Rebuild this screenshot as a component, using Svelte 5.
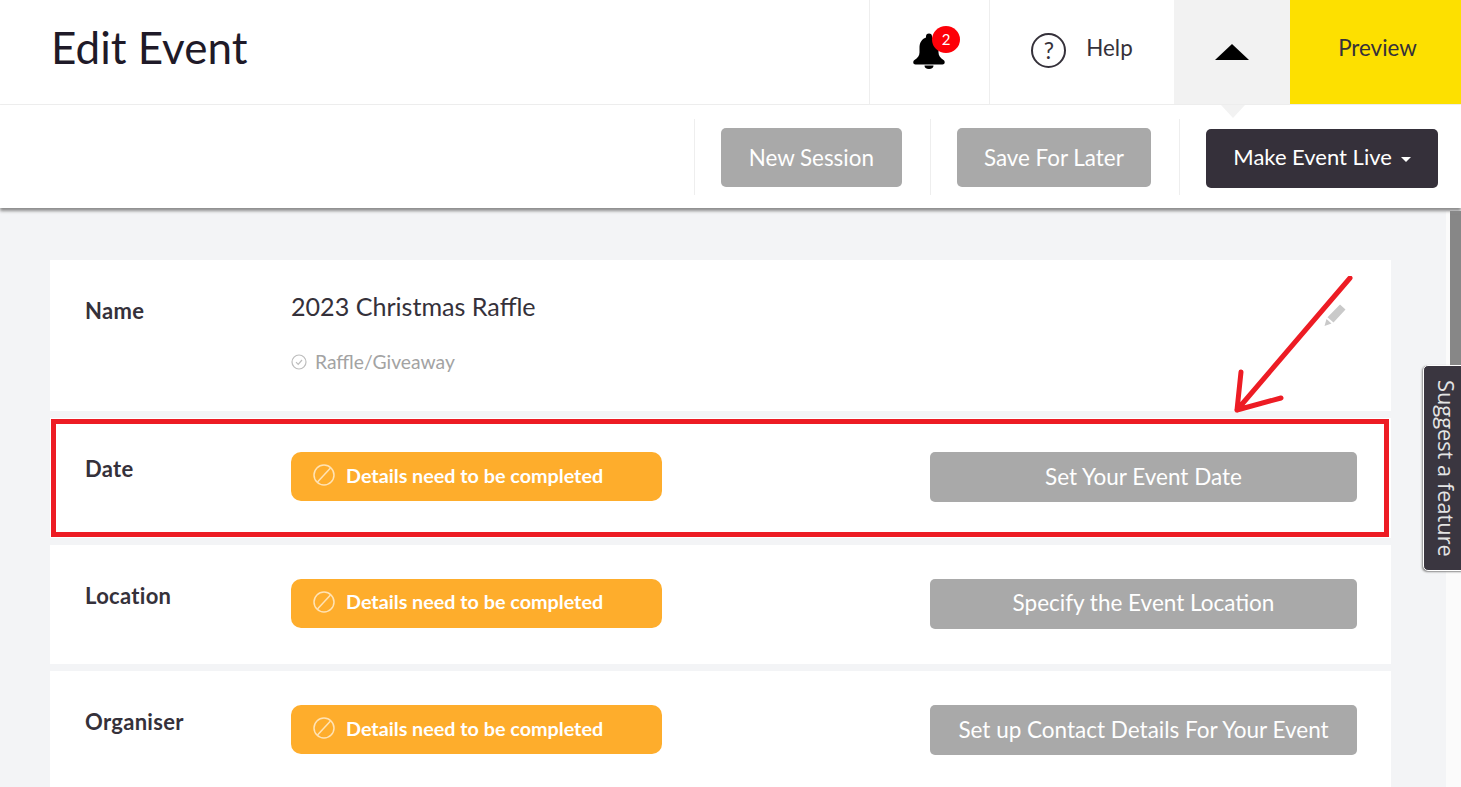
<script>
    const rows = [
        { label: "Date", action: "Set Your Event Date" },
        { label: "Location", action: "Specify the Event Location" },
        { label: "Organiser", action: "Set up Contact Details For Your Event" }
    ];
</script>

<div class="page">
    <header class="top">
        <h1>Edit Event</h1>
        <div class="top-right">
            <div class="cell bell">
                <svg width="34" height="36" viewBox="0 0 34 36">
                    <path fill="#000" d="M17 0.500a3 3 0 0 0-3 3v.9C9.500 6 7.500 9.800 7.500 14.500v5c0 3.500-2 5.500-5 7.500-2 1.400-1.500 4.500 1 4.500h27c2.500 0 3-3.100 1-4.500-3-2-5-4-5-7.500v-5C26.500 9.800 24.500 6 20 4.400v-.9a3 3 0 0 0-3-3zM12.500 32.500a4.500 3.500 0 0 0 9 0z"/>
                </svg>
                <span class="badge">2</span>
            </div>
            <div class="cell help">
                <span class="q">?</span>
                <span>Help</span>
            </div>
            <div class="cell toggle"><i></i></div>
            <div class="cell preview">Preview</div>
        </div>
    </header>

    <div class="toolbar">
        <i class="notch"></i>
        <div class="tool"><button class="btn grey new">New Session</button></div>
        <div class="tool"><button class="btn grey">Save For Later</button></div>
        <div class="tool last"><button class="btn dark">Make Event Live <i class="caret"></i></button></div>
    </div>

    <main class="content">
        <section class="card name-card">
            <div class="label">Name</div>
            <div class="name-body">
                <div class="title">2023 Christmas Raffle</div>
                <div class="type">
                    <svg width="16" height="16" viewBox="0 0 16 16" fill="none" stroke="#bdbdbd" stroke-width="1.200">
                        <circle cx="8" cy="8" r="7"/>
                        <path d="M5 8.200l2.200 2.200L11 6"/>
                    </svg>
                    Raffle/Giveaway
                </div>
            </div>
            <svg class="pencil" width="24" height="24" viewBox="0 0 24 24">
                <path fill="#c9c9c9" d="M17 1.500l5.500 5-12 13-6-5.200zM3.500 16l5 4.400L1.500 23z"/>
            </svg>
        </section>

        {#each rows as row}
            <section class="card">
                <div class="label">{row.label}</div>
                <div class="status">
                    <svg width="22" height="22" viewBox="0 0 22 22" fill="none" stroke="#ffe3b5" stroke-width="1.500">
                        <circle cx="11" cy="11" r="10"/>
                        <path d="M4.500 18L17.500 4"/>
                    </svg>
                    Details need to be completed
                </div>
                <button class="btn grey wide">{row.action}</button>
            </section>
        {/each}
    </main>

    <div class="track"><div class="thumb"></div></div>
    <div class="suggest"><span>Suggest a feature</span></div>

    <div class="mark-box"></div>
    <svg class="mark-arrow" width="130" height="150" viewBox="0 0 130 150" fill="none" stroke="#ed1c24" stroke-width="5" stroke-linecap="round" stroke-linejoin="round">
        <path d="M119 2L6 134M10 96L6 134M50 122L6 134"/>
    </svg>
</div>

<style>
    :global(body) {
        margin: 0;
        font-family: Lato, "Open Sans", sans-serif;
        color: #35313a;
        overflow: hidden;
    }
    .page {
        position: relative;
        height: 787px;
        overflow: hidden;
        background: #f3f4f6;
    }
    .top {
        display: flex;
        justify-content: space-between;
        height: 104px;
        background: #fff;
        border-bottom: 1px solid #eee;
    }
    h1 {
        margin: 0 0 0 51px;
        font-size: 44px;
        font-weight: 400;
        line-height: 95px;
        color: #1f1a28;
    }
    .top-right {
        display: flex;
    }
    .cell {
        display: flex;
        align-items: center;
        justify-content: center;
        font-size: 22.400px;
        padding-bottom: 10px;
        box-sizing: border-box;
    }
    .bell {
        position: relative;
        width: 120px;
        border-left: 1px solid #eee;
        padding-bottom: 0;
    }
    .bell svg {
        margin: 0 2px 3px 0;
    }
    .badge {
        position: absolute;
        top: 26px;
        left: 62px;
        width: 28px;
        height: 27px;
        border-radius: 50%;
        background: #fd0008;
        color: #fff;
        font-size: 15px;
        text-align: center;
        line-height: 27px;
    }
    .help {
        width: 185px;
        gap: 20px;
        border-left: 1px solid #eee;
    }
    .q {
        width: 35px;
        height: 35px;
        margin-top: 6px;
        box-sizing: border-box;
        border: 2px solid #35313a;
        border-radius: 50%;
        text-align: center;
        font-size: 23px;
        line-height: 31px;
    }
    .toggle {
        width: 116px;
        padding-bottom: 0;
        background: #f2f2f2;
    }
    .toggle i {
        border-left: 17px solid transparent;
        border-right: 17px solid transparent;
        border-bottom: 16px solid #000;
    }
    .preview {
        width: 171px;
        padding-left: 4px;
        background: #fde000;
    }
    .toolbar {
        position: relative;
        z-index: 1;
        display: flex;
        justify-content: flex-end;
        align-items: center;
        height: 103px;
        padding-right: 23px;
        background: #fff;
        box-shadow: 0 3px 3px #8d8d8d;
    }
    .notch {
        position: absolute;
        top: 0;
        left: 1221px;
        border-left: 12px solid transparent;
        border-right: 12px solid transparent;
        border-top: 13px solid #f2f2f2;
    }
    .tool {
        display: flex;
        align-items: center;
        height: 76px;
        padding: 0 28px 0 26px;
        border-left: 1px solid #eee;
    }
    .tool.last {
        padding-right: 0;
    }
    .btn {
        height: 59px;
        padding: 0 27px;
        border: 0;
        border-radius: 5px;
        font: inherit;
        font-size: 22.400px;
        color: #fff;
    }
    .new {
        padding: 0 28px;
    }
    .grey {
        margin-top: 2px;
        background: #a9a9a9;
    }
    .dark {
        margin-top: 4px;
        padding: 0 27.500px 4px;
        font-size: 22px;
        background: #35303a;
    }
    .caret {
        display: inline-block;
        margin-left: 3px;
        vertical-align: middle;
        border-left: 5px solid transparent;
        border-right: 5px solid transparent;
        border-top: 5px solid #fff;
    }
    .content {
        display: flex;
        flex-direction: column;
        gap: 7px;
        width: 1341px;
        margin: 52px 0 0 50px;
    }
    .card {
        position: relative;
        display: flex;
        align-items: flex-start;
        height: 119.500px;
        padding: 34.250px 34px 0 35px;
        box-sizing: border-box;
        background: #fff;
    }
    .name-card {
        height: 151px;
        padding-top: 34px;
    }
    .label {
        width: 206px;
        padding-top: 3px;
        font-size: 22px;
        font-weight: 700;
        letter-spacing: 0.300px;
    }
    .title {
        font-size: 25.100px;
        line-height: 28px;
        margin-top: -2px;
    }
    .type {
        display: flex;
        align-items: center;
        gap: 8px;
        margin-top: 30px;
        font-size: 19.300px;
        color: #a3a3a3;
    }
    .pencil {
        position: absolute;
        top: 43px;
        right: 44px;
    }
    .status {
        display: flex;
        align-items: center;
        gap: 11px;
        width: 371px;
        height: 49px;
        padding: 0 0 3px 22px;
        box-sizing: border-box;
        border-radius: 10px;
        background: #fead2c;
        color: #fff;
        font-size: 19.750px;
        font-weight: 700;
    }
    .wide {
        width: 427px;
        height: 50px;
        margin: 0 0 0 auto;
        padding: 0 0 2px;
        font-size: 22.500px;
    }
    .track {
        position: absolute;
        top: 211px;
        right: 0;
        bottom: 0;
        width: 15px;
        background: #fbfbfb;
    }
    .thumb {
        width: 11px;
        height: 160px;
        margin-left: 4px;
        background: #878787;
    }
    .suggest {
        position: absolute;
        top: 365px;
        left: 1423px;
        display: flex;
        align-items: center;
        justify-content: center;
        width: 40px;
        height: 206px;
        padding-left: 6px;
        box-sizing: border-box;
        border: 1px solid #fff;
        border-radius: 5px 0 0 5px;
        background: #3a3640;
        box-shadow: -1px 1px 2px #888;
        color: #e4e4e4;
        font-family: "Open Sans", sans-serif;
        font-size: 21.800px;
    }
    .suggest span {
        writing-mode: vertical-rl;
        white-space: nowrap;
    }
    .mark-box {
        position: absolute;
        top: 419px;
        left: 51px;
        width: 1338px;
        height: 118px;
        box-sizing: border-box;
        border: 5px solid #ed1c24;
    }
    .mark-arrow {
        position: absolute;
        top: 276px;
        left: 1231px;
    }
</style>
